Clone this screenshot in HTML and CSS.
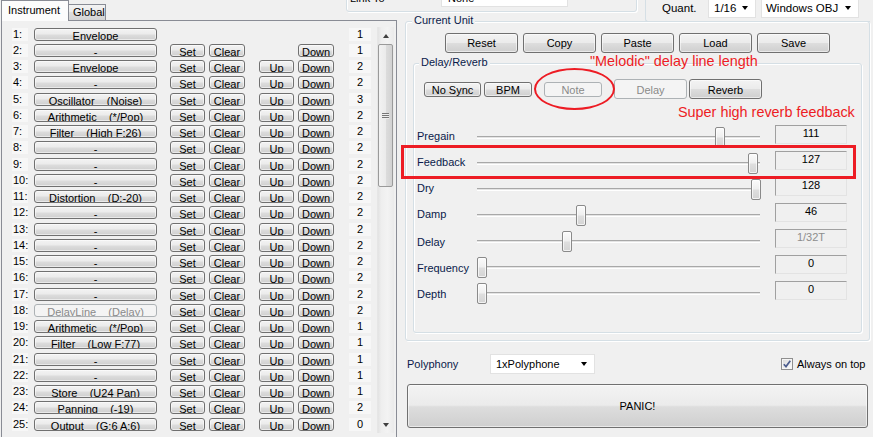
FILE: index.html
```html
<!DOCTYPE html>
<html>
<head>
<meta charset="utf-8">
<link rel="stylesheet" href="styles.css">
</head>
<body>
<div class="window">
  <div class="tabs">
    <div class="tab tab-active">Instrument</div>
    <div class="tab tab-idle">Global</div>
  </div>

  <div class="topbar">
    <div class="link-group">
      <span class="link-label">Link To</span>
      <div class="combo link-combo">None</div>
    </div>
    <div class="quant-group">
      <span class="quant-label">Quant.</span>
      <div class="combo q-combo">1/16<span class="arrow"></span></div>
      <div class="combo os-combo">Windows OBJ<span class="arrow"></span></div>
    </div>
  </div>

  <div class="pane">
    <div class="rows">
      <div class="row"><span class="num">1:</span><span class="btn unit">Envelope</span><span class="count">1</span></div>
      <div class="row"><span class="num">2:</span><span class="btn unit">-</span><span class="btn set">Set</span><span class="btn clear">Clear</span><span class="btn down">Down</span><span class="count">1</span></div>
      <div class="row"><span class="num">3:</span><span class="btn unit">Envelope</span><span class="btn set">Set</span><span class="btn clear">Clear</span><span class="btn up">Up</span><span class="btn down">Down</span><span class="count">2</span></div>
      <div class="row"><span class="num">4:</span><span class="btn unit">-</span><span class="btn set">Set</span><span class="btn clear">Clear</span><span class="btn up">Up</span><span class="btn down">Down</span><span class="count">2</span></div>
      <div class="row"><span class="num">5:</span><span class="btn unit">Oscillator    (Noise)</span><span class="btn set">Set</span><span class="btn clear">Clear</span><span class="btn up">Up</span><span class="btn down">Down</span><span class="count">3</span></div>
      <div class="row"><span class="num">6:</span><span class="btn unit">Arithmetic    (*/Pop)</span><span class="btn set">Set</span><span class="btn clear">Clear</span><span class="btn up">Up</span><span class="btn down">Down</span><span class="count">2</span></div>
      <div class="row"><span class="num">7:</span><span class="btn unit">Filter    (High F:26)</span><span class="btn set">Set</span><span class="btn clear">Clear</span><span class="btn up">Up</span><span class="btn down">Down</span><span class="count">2</span></div>
      <div class="row"><span class="num">8:</span><span class="btn unit">-</span><span class="btn set">Set</span><span class="btn clear">Clear</span><span class="btn up">Up</span><span class="btn down">Down</span><span class="count">2</span></div>
      <div class="row"><span class="num">9:</span><span class="btn unit">-</span><span class="btn set">Set</span><span class="btn clear">Clear</span><span class="btn up">Up</span><span class="btn down">Down</span><span class="count">2</span></div>
      <div class="row"><span class="num">10:</span><span class="btn unit">-</span><span class="btn set">Set</span><span class="btn clear">Clear</span><span class="btn up">Up</span><span class="btn down">Down</span><span class="count">2</span></div>
      <div class="row"><span class="num">11:</span><span class="btn unit">Distortion    (D:-20)</span><span class="btn set">Set</span><span class="btn clear">Clear</span><span class="btn up">Up</span><span class="btn down">Down</span><span class="count">2</span></div>
      <div class="row"><span class="num">12:</span><span class="btn unit">-</span><span class="btn set">Set</span><span class="btn clear">Clear</span><span class="btn up">Up</span><span class="btn down">Down</span><span class="count">2</span></div>
      <div class="row"><span class="num">13:</span><span class="btn unit">-</span><span class="btn set">Set</span><span class="btn clear">Clear</span><span class="btn up">Up</span><span class="btn down">Down</span><span class="count">2</span></div>
      <div class="row"><span class="num">14:</span><span class="btn unit">-</span><span class="btn set">Set</span><span class="btn clear">Clear</span><span class="btn up">Up</span><span class="btn down">Down</span><span class="count">2</span></div>
      <div class="row"><span class="num">15:</span><span class="btn unit">-</span><span class="btn set">Set</span><span class="btn clear">Clear</span><span class="btn up">Up</span><span class="btn down">Down</span><span class="count">2</span></div>
      <div class="row"><span class="num">16:</span><span class="btn unit">-</span><span class="btn set">Set</span><span class="btn clear">Clear</span><span class="btn up">Up</span><span class="btn down">Down</span><span class="count">2</span></div>
      <div class="row"><span class="num">17:</span><span class="btn unit">-</span><span class="btn set">Set</span><span class="btn clear">Clear</span><span class="btn up">Up</span><span class="btn down">Down</span><span class="count">2</span></div>
      <div class="row"><span class="num">18:</span><span class="btn unit disabled">DelayLine    (Delay)</span><span class="btn set">Set</span><span class="btn clear">Clear</span><span class="btn up">Up</span><span class="btn down">Down</span><span class="count">2</span></div>
      <div class="row"><span class="num">19:</span><span class="btn unit">Arithmetic    (*/Pop)</span><span class="btn set">Set</span><span class="btn clear">Clear</span><span class="btn up">Up</span><span class="btn down">Down</span><span class="count">1</span></div>
      <div class="row"><span class="num">20:</span><span class="btn unit">Filter    (Low F:77)</span><span class="btn set">Set</span><span class="btn clear">Clear</span><span class="btn up">Up</span><span class="btn down">Down</span><span class="count">1</span></div>
      <div class="row"><span class="num">21:</span><span class="btn unit">-</span><span class="btn set">Set</span><span class="btn clear">Clear</span><span class="btn up">Up</span><span class="btn down">Down</span><span class="count">1</span></div>
      <div class="row"><span class="num">22:</span><span class="btn unit">-</span><span class="btn set">Set</span><span class="btn clear">Clear</span><span class="btn up">Up</span><span class="btn down">Down</span><span class="count">1</span></div>
      <div class="row"><span class="num">23:</span><span class="btn unit">Store    (U24 Pan)</span><span class="btn set">Set</span><span class="btn clear">Clear</span><span class="btn up">Up</span><span class="btn down">Down</span><span class="count">1</span></div>
      <div class="row"><span class="num">24:</span><span class="btn unit">Panning    (-19)</span><span class="btn set">Set</span><span class="btn clear">Clear</span><span class="btn up">Up</span><span class="btn down">Down</span><span class="count">2</span></div>
      <div class="row"><span class="num">25:</span><span class="btn unit">Output    (G:6 A:6)</span><span class="btn set">Set</span><span class="btn clear">Clear</span><span class="btn up">Up</span><span class="btn down">Down</span><span class="count">0</span></div>
    </div>
    <div class="scrollbar">
      <div class="sb-arrow"><span class="tri-up"></span></div>
      <div class="sb-track"><div class="sb-thumb"><span class="grip"></span></div></div>
      <div class="sb-arrow"><span class="tri-down"></span></div>
    </div>
  </div>

  <div class="right">
    <div class="group cu">
      <div class="group-title">Current Unit</div>
      <div class="cu-buttons">
        <div class="btn cbtn">Reset</div>
        <div class="btn cbtn">Copy</div>
        <div class="btn cbtn">Paste</div>
        <div class="btn cbtn">Load</div>
        <div class="btn cbtn">Save</div>
      </div>
      <div class="group dr">
        <div class="group-title">Delay/Reverb</div>
        <div class="modes">
          <div class="btn mode nosync">No Sync</div>
          <div class="btn mode bpm">BPM</div>
          <div class="btn mode note disabled">Note</div>
          <div class="btn big delay disabled">Delay</div>
          <div class="btn big reverb">Reverb</div>
        </div>
        <div class="sliders">
          <div class="srow"><span class="slabel">Pregain</span><div class="slider"><div class="track"></div><div class="thumb" style="left:238px"></div></div><div class="val">111</div></div>
          <div class="srow"><span class="slabel">Feedback</span><div class="slider"><div class="track"></div><div class="thumb" style="left:271px"></div></div><div class="val">127</div></div>
          <div class="srow"><span class="slabel">Dry</span><div class="slider"><div class="track"></div><div class="thumb" style="left:274px"></div></div><div class="val">128</div></div>
          <div class="srow"><span class="slabel">Damp</span><div class="slider"><div class="track"></div><div class="thumb" style="left:99px"></div></div><div class="val">46</div></div>
          <div class="srow"><span class="slabel low">Delay</span><div class="slider"><div class="track"></div><div class="thumb" style="left:85px"></div></div><div class="val val-dis">1/32T</div></div>
          <div class="srow"><span class="slabel low">Frequency</span><div class="slider"><div class="track"></div><div class="thumb" style="left:0px"></div></div><div class="val">0</div></div>
          <div class="srow"><span class="slabel low">Depth</span><div class="slider"><div class="track"></div><div class="thumb" style="left:0px"></div></div><div class="val">0</div></div>
        </div>
      </div>
    </div>
    <div class="poly">
      <span class="poly-label">Polyphony</span>
      <div class="combo poly-combo">1xPolyphone<span class="arrow"></span></div>
      <div class="check">
        <svg class="cb" width="12" height="12" viewBox="0 0 12 12">
          <defs><linearGradient id="cbg" x1="0" y1="0" x2="1" y2="1"><stop offset="0" stop-color="#dcdcdc"/><stop offset="1" stop-color="#fbfbfb"/></linearGradient></defs>
          <rect x="0.5" y="0.5" width="11" height="11" fill="#f6f6f6" stroke="#8f8f8f"/>
          <rect x="2" y="2" width="8" height="8" fill="url(#cbg)"/>
          <path d="M2.8 6.2 L5 8.6 L9.3 2.8" stroke="#4c5d8e" stroke-width="1.7" fill="none"/>
        </svg>
        <span>Always on top</span>
      </div>
    </div>
    <div class="btn panic">PANIC!</div>
  </div>

  <div class="note-ellipse"></div>
  <div class="annot annot-1">"Melodic" delay line length</div>
  <div class="annot annot-2">Super high reverb feedback</div>
  <div class="annot-box"></div>
</div>
</body>
</html>
```
FILE: styles.css
```css
* { box-sizing: border-box; }
html, body { margin: 0; padding: 0; }
body {
  background: #f0f0f0;
  font-family: "Liberation Sans", Arial, sans-serif;
  font-size: 11px;
  color: #000;
}
.window {
  position: relative;
  width: 873px;
  height: 437px;
  overflow: hidden;
  display: grid;
  grid-template-columns: 397px 476px;
  grid-template-rows: 20px 417px;
}

/* tabs */
.tabs {
  grid-row: 1;
  grid-column: 1;
  display: flex;
  align-items: flex-end;
  padding-left: 1px;
  z-index: 3;
}
.tab {
  border: 1px solid #898c95;
  border-bottom: none;
  white-space: nowrap;
}
.tab-active {
  width: 68px;
  height: 21px;
  margin-bottom: -1px;
  padding: 3px 0 0 6px;
  line-height: 13px;
  background: #fcfcfc;
  position: relative;
  z-index: 2;
}
.tab-idle {
  width: 38px;
  height: 16px;
  margin-left: -1px;
  padding: 1px 0 0 4px;
  line-height: 13px;
  background: linear-gradient(#f3f3f3, #ebebeb 50%, #dedede 50%, #d3d3d3);
}

/* top bar */
.topbar {
  grid-row: 1;
  grid-column: 1 / 3;
  display: flex;
  align-items: flex-start;
  padding-left: 346px;
  z-index: 1;
}
.link-group {
  margin-top: -14px;
  width: 291px;
  height: 26px;
  border: 1px solid #d5dfe5;
  border-radius: 3px;
  box-shadow: 1px 1px 0 #fff, inset 1px 1px 0 #fff;
  display: flex;
  align-items: flex-start;
  padding-left: 3px;
}
.link-label {
  width: 91px;
  line-height: 20px;
  padding-top: 1px;
}
.combo {
  background: #fff;
  border: 1px solid #e2e2e2;
  position: relative;
  white-space: nowrap;
}
.link-combo {
  width: 127px;
  height: 20px;
  line-height: 18px;
  padding: 1px 0 0 6px;
}
.arrow {
  position: absolute;
  top: 50%;
  right: 7px;
  margin-top: -2px;
  width: 0;
  height: 0;
  border-left: 3.5px solid transparent;
  border-right: 3.5px solid transparent;
  border-top: 4px solid #000;
}
.quant-group {
  margin-left: 8px;
  margin-top: -10px;
  width: 225px;
  height: 32px;
  border-left: 1px solid #d5dfe5;
  border-bottom: 1px solid #d5dfe5;
  border-bottom-left-radius: 3px;
  display: flex;
  align-items: flex-start;
  padding: 7px 0 0 16px;
}
.quant-label {
  width: 46px;
  line-height: 19px;
  padding-top: 2px;
  font-size: 11.5px;
}
.q-combo, .os-combo {
  height: 21px;
  line-height: 18px;
  padding: 1px 0 0 5px;
  font-size: 11.5px;
}
.q-combo { width: 48px; }
.os-combo { width: 98px; margin-left: 5px; padding-left: 4px; }

/* left pane */
.pane {
  grid-row: 2;
  grid-column: 1;
  margin-left: 1px;
  width: 396px;
  border: 1px solid #898c95;
  border-bottom: none;
  display: flex;
  align-items: flex-start;
  background: #f0f0f0;
}
.rows {
  padding-top: 6.6px;
  display: flex;
  flex-direction: column;
}
.row {
  height: 16.25px;
  display: grid;
  grid-template-columns: 10px 16px 6px 123px 13px 35px 4px 36px 14px 35px 4px 36px 15px 22px;
  align-items: start;
}
.num, .count {
  height: 13px;
  line-height: 13px;
  background: #f7f7f7;
}
.num { grid-column: 2; padding-left: 1px; }
.count { grid-column: 14; text-align: center; }
.btn {
  border: 1px solid #707070;
  border-radius: 3px;
  background: linear-gradient(#f3f3f3 0%, #ebebeb 48%, #dddddd 52%, #cfcfcf 100%);
  box-shadow: inset 0 0 0 1px rgba(255, 255, 255, 0.55);
  text-align: center;
  white-space: pre;
  overflow: hidden;
  color: #000;
}
.btn.disabled {
  border-color: #adb2b5;
  background: #f4f4f4;
  box-shadow: none;
  color: #8a8a8a;
}
.row .btn {
  height: 13px;
  line-height: 12px;
  padding-top: 1px;
}
.unit { grid-column: 4; }
.set { grid-column: 6; }
.clear { grid-column: 8; }
.up { grid-column: 10; }
.down { grid-column: 12; }

.scrollbar {
  margin-top: 6px;
  margin-left: 6px;
  width: 17px;
  height: 406px;
  display: flex;
  flex-direction: column;
  background: linear-gradient(90deg, #e3e3e3, #eeeeee 20%, #f3f3f3 60%, #eaeaea);
  border-left: 1px solid #e6e6e6;
}
.sb-arrow {
  height: 17px;
  display: flex;
  align-items: center;
  justify-content: center;
}
.tri-up, .tri-down {
  width: 0;
  height: 0;
  border-left: 3.5px solid transparent;
  border-right: 3.5px solid transparent;
}
.tri-up { border-bottom: 4px solid #404040; }
.tri-down { border-top: 4px solid #404040; }
.sb-track { flex: 1; }
.sb-thumb {
  height: 143px;
  width: 15px;
  border: 1px solid #9a9a9a;
  border-radius: 2px;
  background: linear-gradient(90deg, #f2f2f2, #ebebeb 50%, #dcdcdc 55%, #d2d2d2);
  display: flex;
  align-items: center;
  justify-content: center;
}
.grip {
  width: 7px;
  height: 6px;
  background: repeating-linear-gradient(#777 0, #777 1px, #eee 1px, #eee 2px);
}

/* right side */
.right {
  grid-row: 2;
  grid-column: 2;
  display: flex;
  flex-direction: column;
  align-items: flex-start;
}
.group {
  border: 1px solid #d5dfe5;
  border-radius: 3px;
  box-shadow: 1px 1px 0 #fff, inset 1px 1px 0 #fff;
}
.group-title {
  width: fit-content;
  margin: -8px 0 0 6px;
  padding: 0 2px;
  background: #f0f0f0;
  line-height: 13px;
  color: #0a1a4a;
}
.cu {
  margin: 1px 0 0 8px;
  width: 465px;
  height: 320px;
}
.cu-buttons {
  margin-top: 6px;
  display: flex;
  justify-content: center;
  gap: 5px;
}
.cbtn {
  width: 73px;
  height: 20px;
  line-height: 17px;
  padding-top: 1px;
}
.dr {
  margin: 10px 7px 0;
  height: 270px;
}
.dr .group-title { margin-left: 5px; }
.modes {
  margin-top: 10px;
  height: 20px;
  padding-left: 10px;
  display: flex;
  align-items: center;
}
.mode {
  height: 15px;
  line-height: 12px;
  padding-top: 1.5px;
}
.nosync { width: 57px; }
.bpm { width: 48px; margin-left: 3px; }
.note { width: 58px; margin-left: 12px; }
.big { width: 73px; height: 20px; line-height: 18px; padding-top: 1px; }
.delay { margin-left: 12px; }
.reverb { margin-left: 2px; }

.sliders {
  margin-top: 26px;
  padding-left: 3px;
  display: flex;
  flex-direction: column;
}
.srow {
  height: 26px;
  display: flex;
  align-items: flex-start;
}
.slabel {
  width: 60px;
  line-height: 13px;
  padding-top: 5px;
  color: #0a1a4a;
}
.slabel.low { padding-top: 7px; }
.slider {
  width: 283px;
  height: 26px;
  position: relative;
}
.track {
  margin-top: 11px;
  height: 3px;
  border-top: 1px solid #a8a8a8;
  border-bottom: 1px solid #ffffff;
  background: #e4e4e4;
}
.thumb {
  position: absolute;
  top: 2px;
  width: 10px;
  height: 21px;
  border: 1px solid #8a8a8a;
  border-radius: 2px;
  background: linear-gradient(#fbfbfb, #f0f0f0 45%, #dedede 55%, #d4d4d4);
  box-shadow: inset 0 0 0 1px rgba(255, 255, 255, 0.7);
}
.val {
  margin-left: 15px;
  width: 72px;
  height: 19px;
  border: 1px solid;
  border-color: #a0a0a0 #e3e3e3 #e3e3e3 #a0a0a0;
  text-align: center;
  line-height: 13px;
  padding-top: 1px;
}
.val-dis { color: #8d8d8d; }

.poly {
  margin-top: 13px;
  padding-left: 10px;
  height: 20px;
  display: flex;
  align-items: center;
}
.poly-label { width: 83px; color: #0a1a4a; }
.poly-combo {
  width: 105px;
  height: 20px;
  line-height: 18px;
  padding-left: 5px;
}
.check {
  margin-left: 186px;
  display: flex;
  align-items: center;
  gap: 4px;
}
.cb { display: block; }
.panic {
  margin: 10px 0 0 10px;
  width: 461px;
  height: 44px;
  line-height: 42px;
  font-size: 11px;
}

/* annotations lying over the UI */
.note-ellipse {
  position: absolute;
  left: 534px;
  top: 68px;
  width: 81px;
  height: 42px;
  border: 2.5px solid #ed1c24;
  border-radius: 50%;
}
.annot {
  position: absolute;
  color: #ed1c24;
  font-size: 14.4px;
  line-height: 16px;
  white-space: nowrap;
}
.annot-1 { left: 590px; top: 53px; }
.annot-2 { left: 678px; top: 104px; }
.annot-box {
  position: absolute;
  left: 401px;
  top: 145px;
  width: 455px;
  height: 34px;
  border: 3px solid #ed1c24;
}
```
